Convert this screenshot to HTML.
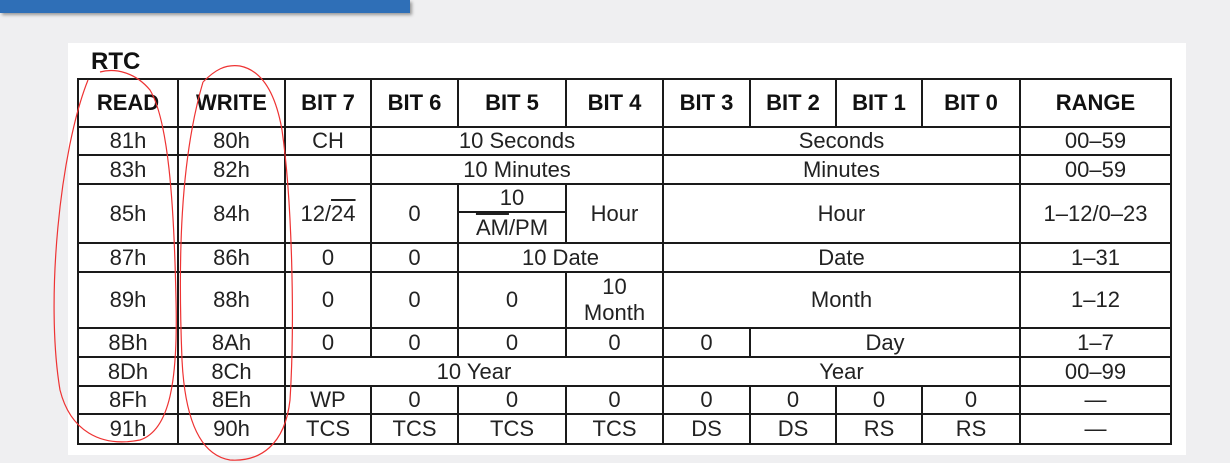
<!DOCTYPE html>
<html><head><style>
body{margin:0;width:1230px;height:463px;background:#efeff1;position:relative;overflow:hidden;font-family:"Liberation Sans",Arial,sans-serif}
.bar{position:absolute;left:0;top:0;width:410px;height:13px;background:#2f6fb7;box-shadow:2px 2px 3px #999}
.panel{position:absolute;left:68px;top:43px;width:1118px;height:412px;background:#fff}
.rtc{position:absolute;left:91px;top:48px;font-weight:bold;font-size:24px;color:#111}
table{position:absolute;left:77px;top:78px;border-collapse:collapse;table-layout:fixed;width:1094px}
td{border:2px solid #1a1a1a;text-align:center;font-size:22px;color:#222;padding:0;line-height:24px}
tr.h td{font-weight:bold;color:#111;font-size:22px}
.ol{text-decoration:overline}
svg{position:absolute;left:0;top:0}
</style></head><body>
<div class="bar"></div>
<div class="panel"></div>
<div class="rtc">RTC</div>
<table>
<colgroup><col style="width:100px"><col style="width:107px"><col style="width:86px"><col style="width:87px"><col style="width:108px"><col style="width:97px"><col style="width:87px"><col style="width:86px"><col style="width:86px"><col style="width:98px"><col style="width:151px"></colgroup>
<tr class="h" style="height:48px"><td>READ</td><td>WRITE</td><td>BIT 7</td><td>BIT 6</td><td>BIT 5</td><td>BIT 4</td><td>BIT 3</td><td>BIT 2</td><td>BIT 1</td><td>BIT 0</td><td>RANGE</td></tr>
<tr style="height:28px"><td>81h</td><td>80h</td><td>CH</td><td colspan="3">10 Seconds</td><td colspan="4">Seconds</td><td>00–59</td></tr>
<tr style="height:29px"><td>83h</td><td>82h</td><td></td><td colspan="3">10 Minutes</td><td colspan="4">Minutes</td><td>00–59</td></tr>
<tr style="height:59px"><td>85h</td><td>84h</td><td>12/<span class="ol">24</span></td><td>0</td><td><div style="border-bottom:2px solid #1a1a1a;height:26px;line-height:26px">10</div><div style="height:29px;line-height:29px"><span class="ol">AM</span>/PM</div></td><td>Hour</td><td colspan="4">Hour</td><td>1–12/0–23</td></tr>
<tr style="height:29px"><td>87h</td><td>86h</td><td>0</td><td>0</td><td colspan="2">10 Date</td><td colspan="4">Date</td><td>1–31</td></tr>
<tr style="height:56px"><td>89h</td><td>88h</td><td>0</td><td>0</td><td>0</td><td style="line-height:26px">10<br>Month</td><td colspan="4">Month</td><td>1–12</td></tr>
<tr style="height:29px"><td>8Bh</td><td>8Ah</td><td>0</td><td>0</td><td>0</td><td>0</td><td>0</td><td colspan="3">Day</td><td>1–7</td></tr>
<tr style="height:29px"><td>8Dh</td><td>8Ch</td><td colspan="4">10 Year</td><td colspan="4">Year</td><td>00–99</td></tr>
<tr style="height:28px"><td>8Fh</td><td>8Eh</td><td>WP</td><td>0</td><td>0</td><td>0</td><td>0</td><td>0</td><td>0</td><td>0</td><td>—</td></tr>
<tr style="height:30px"><td>91h</td><td>90h</td><td>TCS</td><td>TCS</td><td>TCS</td><td>TCS</td><td>DS</td><td>DS</td><td>RS</td><td>RS</td><td>—</td></tr>
</table>
<svg width="1230" height="463" fill="none" stroke="#e33" stroke-width="1.2">
<path d="M88 80 C60 150 45 300 60 390 C70 430 100 448 140 440 C170 430 178 380 176 300 C174 200 168 120 150 90 C135 72 115 68 100 72"/>
<path d="M203 82 C215 70 225 64 240 66 C260 70 275 90 282 130 C292 200 295 320 290 400 C285 445 260 462 230 460 C200 455 185 420 182 360 C178 260 180 160 203 82"/>
</svg>
</body></html>
